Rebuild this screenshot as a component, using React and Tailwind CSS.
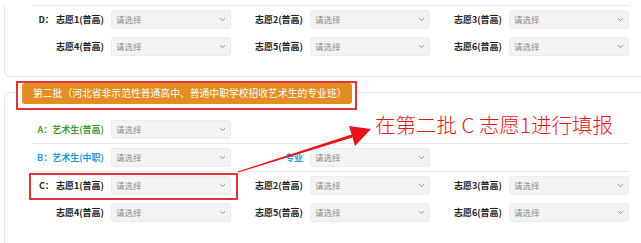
import { ChevronDown } from 'lucide-react';

const Select = () => (
  <div className="flex h-[19px] w-[120px] items-center justify-between rounded-[3px] border border-[#ececec] bg-[#f3f3f3] pl-[4px] pr-[3px]">
    <span className="text-[8.5px] leading-none text-[#8a8a8a]">请选择</span>
    <ChevronDown size={9} strokeWidth={2} color="#777" />
  </div>
);

const Field = ({ label, color = 'text-[#222]', empty }) => (
  <div className="flex w-[199px] items-center">
    {!empty && (
      <>
        <div className={`w-[79px] whitespace-nowrap pr-[7px] text-right text-[9px] font-bold leading-none ${color}`}>
          {label}
        </div>
        <Select />
      </>
    )}
  </div>
);

const Row = ({ children, className = '' }) => (
  <div className={`relative flex h-[27px] items-center ${className}`}>{children}</div>
);

const App = () => {
  return (
    <div className="relative h-[243px] w-[641px] overflow-hidden bg-white font-['Noto_Sans_CJK_SC',sans-serif]">
      {/* first card, top cut off */}
      <div className="ml-[4px] w-[680px] rounded-b-[6px] border-x border-b border-[#e4e4e4] pb-[16px]">
        <div className="ml-[27px] mt-[5px] w-[597px] border-t border-[#e8e8e8]">
          <Row>
            <Field label="D： 志愿1(普高)" />
            <Field label="志愿2(普高)" />
            <Field label="志愿3(普高)" />
          </Row>
          <Row>
            <Field label="志愿4(普高)" />
            <Field label="志愿5(普高)" />
            <Field label="志愿6(普高)" />
          </Row>
        </div>
      </div>

      {/* second card */}
      <div className="ml-[4px] mt-[15px] w-[680px] rounded-tl-[6px] border-l border-t border-[#e4e4e4] pb-[20px]">
        <div className="-mt-[12px] ml-[11px] h-[29px] w-[341px] border-2 border-[#e3323a] bg-white pb-[4px] pl-[4px] pr-[3px]">
          <div className="flex h-[21px] items-center rounded-[3px] bg-[#e38d22] pl-[11px] text-[9.8px] leading-none text-white">
            第二批（河北省非示范性普通高中、普通中职学校招收艺术生的专业班）
          </div>
        </div>

        <div className="ml-[27px] mt-[6px] w-[597px]">
          <Row>
            <Field label="A：艺术生(普高)" color="text-[#3f9c35]" />
          </Row>
          <div className="border-t border-[#e8e8e8]">
            <Row>
              <Field label="B：艺术生(中职)" color="text-[#1f9ad6]" />
              <Field label="专业" color="text-[#1f9ad6]" />
            </Row>
          </div>
          <div className="border-t border-[#e8e8e8]">
            <Row>
              <Field label="C： 志愿1(普高)" />
              <Field label="志愿2(普高)" />
              <Field label="志愿3(普高)" />
              <div className="absolute left-[-3px] top-[1px] h-[27px] w-[209px] border-2 border-[#e3323a]" />
            </Row>
            <Row>
              <Field label="志愿4(普高)" />
              <Field label="志愿5(普高)" />
              <Field label="志愿6(普高)" />
            </Row>
          </div>
        </div>
      </div>

      {/* annotation */}
      <svg className="pointer-events-none absolute left-0 top-0" width="641" height="243" viewBox="0 0 641 243">
        <polygon points="237.8,171.4 351.5,134.6 352.5,137.4 238.2,172.6" fill="#e8141a" />
        <polygon points="349,126 371,129 355,146" fill="#e8141a" />
      </svg>
      <div className="absolute left-[375px] top-[114px] whitespace-nowrap text-[20.5px] font-light leading-none text-[#e8141a]">
        在第二批 C 志愿1进行填报
      </div>
    </div>
  );
};

export default App;
